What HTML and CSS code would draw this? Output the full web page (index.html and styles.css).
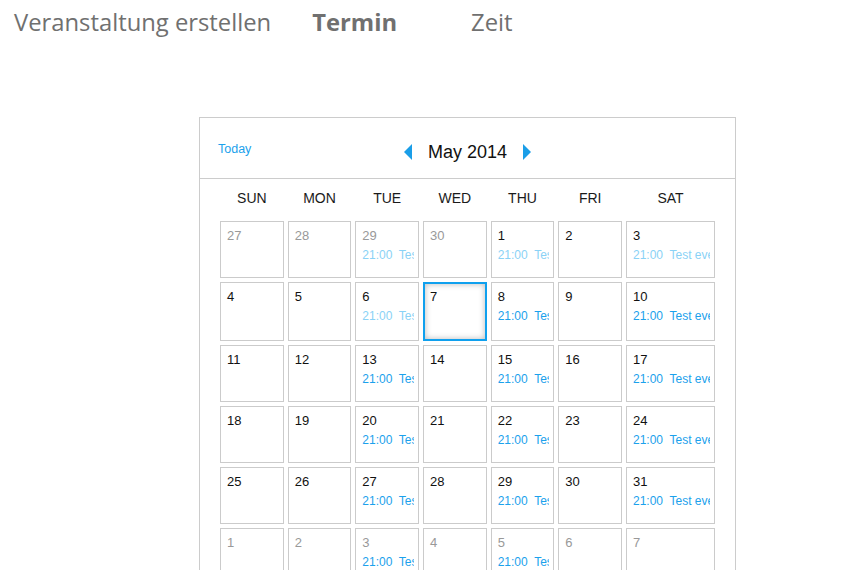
FILE: index.html
```html
<!DOCTYPE html>
<html lang="de">
<head>
<meta charset="utf-8">
<title>Veranstaltung erstellen</title>
<link rel="stylesheet" href="styles.css">
</head>
<body>
<nav class="steps">
  <span class="step step-first">Veranstaltung erstellen</span>
  <span class="step step-active">Termin</span>
  <span class="step step-last">Zeit</span>
</nav>

<section class="calendar">
  <header class="cal-head">
    <a class="today">Today</a>
    <div class="month-nav">
      <svg class="arrow" width="8" height="16" viewBox="0 0 8 16"><path d="M8 0 L0 8 L8 16 Z"/></svg>
      <span class="month">May 2014</span>
      <svg class="arrow" width="8" height="16" viewBox="0 0 8 16"><path d="M0 0 L8 8 L0 16 Z"/></svg>
    </div>
  </header>
  <div class="cal-body">
    <div class="weekdays">
      <span>SUN</span><span>MON</span><span>TUE</span><span>WED</span><span>THU</span><span>FRI</span><span>SAT</span>
    </div>
    <div class="days">
      <div class="day other"><span class="num">27</span></div>
      <div class="day other"><span class="num">28</span></div>
      <div class="day other"><span class="num">29</span><div class="event past">21:00&nbsp; Test event</div></div>
      <div class="day other"><span class="num">30</span></div>
      <div class="day"><span class="num">1</span><div class="event past">21:00&nbsp; Test event</div></div>
      <div class="day"><span class="num">2</span></div>
      <div class="day"><span class="num">3</span><div class="event past">21:00&nbsp; Test event</div></div>

      <div class="day"><span class="num">4</span></div>
      <div class="day"><span class="num">5</span></div>
      <div class="day"><span class="num">6</span><div class="event past">21:00&nbsp; Test event</div></div>
      <div class="day selected"><span class="num">7</span></div>
      <div class="day"><span class="num">8</span><div class="event">21:00&nbsp; Test event</div></div>
      <div class="day"><span class="num">9</span></div>
      <div class="day"><span class="num">10</span><div class="event">21:00&nbsp; Test event</div></div>

      <div class="day"><span class="num">11</span></div>
      <div class="day"><span class="num">12</span></div>
      <div class="day"><span class="num">13</span><div class="event">21:00&nbsp; Test event</div></div>
      <div class="day"><span class="num">14</span></div>
      <div class="day"><span class="num">15</span><div class="event">21:00&nbsp; Test event</div></div>
      <div class="day"><span class="num">16</span></div>
      <div class="day"><span class="num">17</span><div class="event">21:00&nbsp; Test event</div></div>

      <div class="day"><span class="num">18</span></div>
      <div class="day"><span class="num">19</span></div>
      <div class="day"><span class="num">20</span><div class="event">21:00&nbsp; Test event</div></div>
      <div class="day"><span class="num">21</span></div>
      <div class="day"><span class="num">22</span><div class="event">21:00&nbsp; Test event</div></div>
      <div class="day"><span class="num">23</span></div>
      <div class="day"><span class="num">24</span><div class="event">21:00&nbsp; Test event</div></div>

      <div class="day"><span class="num">25</span></div>
      <div class="day"><span class="num">26</span></div>
      <div class="day"><span class="num">27</span><div class="event">21:00&nbsp; Test event</div></div>
      <div class="day"><span class="num">28</span></div>
      <div class="day"><span class="num">29</span><div class="event">21:00&nbsp; Test event</div></div>
      <div class="day"><span class="num">30</span></div>
      <div class="day"><span class="num">31</span><div class="event">21:00&nbsp; Test event</div></div>

      <div class="day other"><span class="num">1</span></div>
      <div class="day other"><span class="num">2</span></div>
      <div class="day other"><span class="num">3</span><div class="event">21:00&nbsp; Test event</div></div>
      <div class="day other"><span class="num">4</span></div>
      <div class="day other"><span class="num">5</span><div class="event">21:00&nbsp; Test event</div></div>
      <div class="day other"><span class="num">6</span></div>
      <div class="day other"><span class="num">7</span></div>
    </div>
  </div>
</section>
</body>
</html>
```

FILE: styles.css
```css
* { box-sizing: border-box; }

html, body {
  margin: 0;
  padding: 0;
  background: #fff;
}

body {
  font-family: "Liberation Sans", Arial, sans-serif;
  color: #111;
}

.steps {
  display: flex;
  align-items: baseline;
  padding: 6px 0 0 14px;
  height: 46px;
  font-family: "Open Sans", sans-serif;
  font-size: 23.8px;
  color: #707070;
}

.step-first { margin-right: 41px; }
.step-active { font-weight: 700; margin-right: 74px; }

.calendar {
  margin: 71px 0 0 199px;
  width: 537px;
  border: 1px solid #cccccc;
}

.cal-head {
  position: relative;
  height: 61px;
  border-bottom: 1px solid #cccccc;
  display: flex;
  align-items: center;
  justify-content: center;
}

.today {
  position: absolute;
  left: 18px;
  top: 24px;
  font-size: 12.5px;
  color: #1ba1ec;
}

.month-nav {
  display: flex;
  align-items: center;
  margin-top: 8px;
}

.arrow { fill: #1a9ee8; display: block; }

.month {
  font-size: 18px;
  margin: 0 16px;
  color: #111;
}

.cal-body {
  padding: 0 20px 20px;
}

.weekdays,
.days {
  display: grid;
  grid-template-columns: repeat(6, 1fr) 89px;
  column-gap: 4px;
}

.weekdays {
  height: 38px;
  align-items: center;
  margin-bottom: 4px;
  font-size: 14px;
  color: #1a1a1a;
  text-align: center;
}

.days { row-gap: 4px; }

.day {
  min-height: 57px;
  border: 1px solid #cbcbcb;
  padding: 6px 4px 0 6px;
  overflow: hidden;
  min-width: 0;
}

.num {
  display: block;
  font-size: 13px;
  line-height: 16px;
  color: #111;
}

.other .num { color: #999; }

.selected {
  min-height: 59px;
  border: 2px solid #0fa0ee;
  padding: 5px 3px 0 5px;
  box-shadow: inset 0 0 6px rgba(0, 0, 0, 0.28);
}

.event {
  margin-top: 4px;
  font-size: 12px;
  line-height: 14px;
  color: #1ba1ec;
  white-space: nowrap;
  overflow: hidden;
}

.event.past { color: #8ad2f6; }
```
